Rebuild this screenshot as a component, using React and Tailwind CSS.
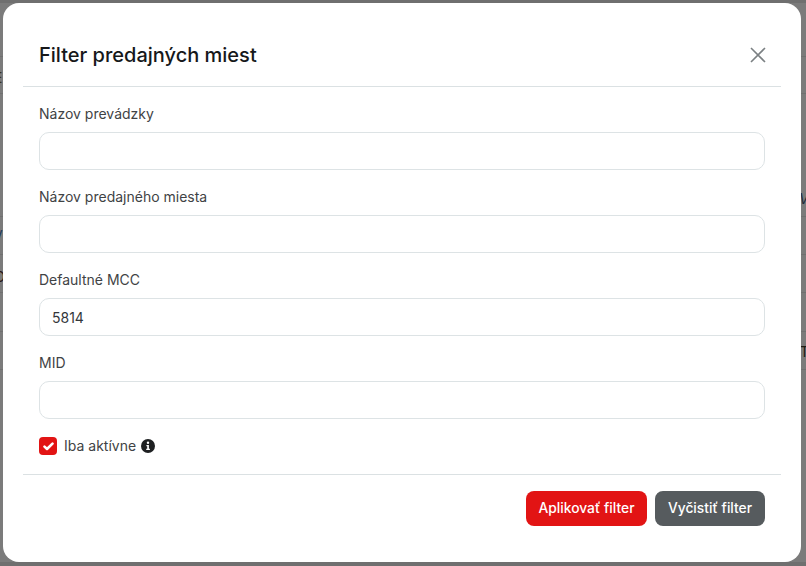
import React from "react";

function Field({ label, value }) {
  return (
    <div className="flex flex-col">
      <label className="mb-[8px] text-[14px] leading-[20px] text-[#3f4345]">{label}</label>
      <input
        readOnly
        value={value || ""}
        className="h-[38px] w-full rounded-[10px] border border-[#dde3e5] bg-white px-[12px] text-[14px] text-[#33373a] outline-none"
      />
    </div>
  );
}

function Backdrop() {
  return (
    <div className="flex h-full w-full flex-col bg-[#7b7b7b]">
      <div className="h-[3px] bg-[#6f6f6f]" />
      <div className="h-[54px] border-b border-[#707070]" />
      <div className="h-[37px] border-b border-[#707070]" />
      <div className="h-[123px] border-b border-[#707070]" />
      <div className="h-[38px] border-b border-[#707070]" />
      <div className="h-[38px] border-b border-[#707070]" />
      <div className="h-[39px] border-b border-[#707070]" />
      <div className="h-[38px] border-b border-[#707070]" />
      <div className="flex-1" />
      <div className="h-[4px] bg-[#6f6f6f]" />
    </div>
  );
}

export default function App() {
  return (
    <div className="relative h-[566px] w-[806px] overflow-hidden font-['Inter',sans-serif]">
      <Backdrop />
      <span className="absolute left-[-6px] top-[69px] text-[14px] leading-[18px] text-[#3a3222]">E</span>
      <span className="absolute left-[-7px] top-[227px] text-[14px] leading-[18px] text-[#1f3a5a]">V</span>
      <span className="absolute left-[-5px] top-[268px] text-[14px] leading-[18px] text-[#2a1a1a]">D</span>
      <span className="absolute left-[799px] top-[190px] text-[14px] italic leading-[18px] text-[#1c2a3a]">V</span>
      <span className="absolute left-[800px] top-[343px] text-[14px] leading-[18px] text-[#1e1a12]">T</span>
      <div className="absolute inset-0 pl-[3px] pt-[3px]">
        <div className="flex h-[559px] w-[798px] flex-col rounded-[16px] bg-white px-[20px]">
          <div className="flex items-center justify-between border-b border-[#dbe1e3] pb-[17px] pl-[16px] pr-[15px] pt-[38px]">
            <h2 className="text-[20px] font-medium leading-[28px] text-[#16181a]">Filter predajných miest</h2>
            <svg width="16" height="16" viewBox="0 0 16 16" fill="none" stroke="#7b8083" strokeWidth="1.6">
              <path d="M1 1 L15 15 M15 1 L1 15" />
            </svg>
          </div>
          <div className="flex flex-col gap-[17px] px-[16px] pt-[17px]">
            <Field label="Názov prevádzky" />
            <Field label="Názov predajného miesta" />
            <Field label="Defaultné MCC" value="5814" />
            <Field label="MID" />
          </div>
          <div className="flex items-center px-[16px] pt-[17px]">
            <span className="flex h-[18px] w-[18px] items-center justify-center rounded-[4px] bg-[#e21414]">
              <svg width="11" height="9" viewBox="0 0 11 9" fill="none" stroke="white" strokeWidth="2.6" strokeLinecap="round" strokeLinejoin="round">
                <path d="M1.5 4.6 L4 7 L9.5 1.6" />
              </svg>
            </span>
            <span className="ml-[7px] text-[14px] leading-[20px] text-[#3f4345]">Iba aktívne</span>
            <svg className="ml-[5px]" width="14" height="14" viewBox="0 0 14 14">
              <circle cx="7" cy="7" r="7" fill="#1e2022" />
              <circle cx="7" cy="3.8" r="1.2" fill="white" />
              <path d="M5.4 6 H7.9 V9.8 H8.9 V11 H5.2 V9.8 H6.2 V7.2 H5.4 Z" fill="white" />
            </svg>
          </div>
          <div className="mt-[18px] flex justify-end gap-[8px] border-t border-[#dbe1e3] pr-[16px] pt-[16px]">
            <button className="h-[35px] w-[121px] rounded-[8px] bg-[#e21414] text-[13.8px] font-medium text-white">Aplikovať filter</button>
            <button className="h-[35px] w-[110px] rounded-[8px] bg-[#565b5e] text-[13.8px] font-medium text-white">Vyčistiť filter</button>
          </div>
        </div>
      </div>
    </div>
  );
}
